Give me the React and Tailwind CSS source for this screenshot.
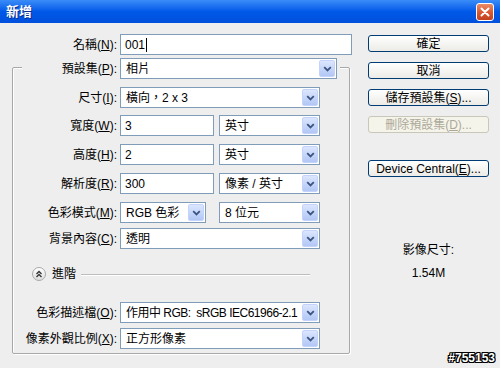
import React from "react";

const Chevron = () => (
  <svg width="9" height="6" viewBox="0 0 9 6">
    <path d="M1.2 1.2 L4.5 4.5 L7.8 1.2" fill="none" stroke="#3B5482" strokeWidth="1.8" />
  </svg>
);

const Select = ({ w, children }) => (
  <div className={`${w} h-[21px] border border-[#7F9DB9] bg-white flex items-center pl-[5px] pr-[1px]`}>
    <span className="whitespace-nowrap overflow-hidden flex-1">{children}</span>
    <div className="w-[16px] h-[17px] shrink-0 rounded-[2px] border border-[#C3D3FD] bg-linear-to-b from-[#DCE6FD] to-[#B2C7F5] flex items-center justify-center">
      <Chevron />
    </div>
  </div>
);

const Input = ({ w, children }) => (
  <div className={`${w} h-[21px] border border-[#7F9DB9] bg-white flex items-center pl-[4px] whitespace-nowrap`}>
    {children}
  </div>
);

const Label = ({ w, children }) => (
  <div className={`${w} shrink-0 text-right whitespace-nowrap pr-[3px]`}>{children}</div>
);

const Btn = ({ children, disabled }) => (
  <div
    className={`w-[121px] h-[17px] rounded-[3px] border flex items-center justify-center whitespace-nowrap ${
      disabled
        ? "border-[#C9C7BA] text-[#ACA899] bg-[#F5F4EA]"
        : "border-[#003C74] bg-linear-to-b from-[#FFFFFF] to-[#ECEBE6]"
    }`}
  >
    {children}
  </div>
);

export default function App() {
  return (
    <div className="w-[500px] h-[368px] relative overflow-hidden bg-[#EEEEEE] text-black text-[12px] leading-[16px] font-['Liberation_Sans','Noto_Sans_CJK_TC',sans-serif]">
      {/* Title bar */}
      <div className="h-[23px] bg-linear-to-b from-[#3A8CF8] via-[#0058E8] to-[#0050DC] flex items-center pl-[6px] pr-[6px]">
        <span className="text-white font-bold text-[13px] [text-shadow:1px_1px_0_#0A2E8C]">新增</span>
        <div className="ml-auto w-[18px] h-[18px] rounded-[3px] border border-white bg-linear-to-b from-[#E98C6A] via-[#DA5A33] to-[#C2401F] flex items-center justify-center">
          <svg width="10" height="10" viewBox="0 0 10 10">
            <path d="M1.5 1.5 L8.5 8.5 M8.5 1.5 L1.5 8.5" stroke="#fff" strokeWidth="2" strokeLinecap="round" />
          </svg>
        </div>
      </div>

      <div className="flex">
        {/* Left column */}
        <div className="w-[358px]">
          <div className="mt-[11px] flex items-center">
            <Label w="w-[120px]">名稱(<u>N</u>):</Label>
            <Input w="w-[232px]">
              001<span className="inline-block w-[1px] h-[14px] bg-black ml-[1px]" />
            </Input>
          </div>

          <div className="mt-[3px] ml-[22px] w-[318px] relative z-10 bg-[#EEEEEE] flex items-center">
            <Label w="w-[98px]">預設集(<u>P</u>):</Label>
            <Select w="w-[217px]">相片</Select>
          </div>

          <div className="ml-[12px] w-[338px] h-[287px] mt-[-12px] border border-[#A8A8A8] rounded-[2px] shadow-[inset_1px_1px_0_#fff,1px_1px_0_#fff]">
            <div className="mt-[19px] flex items-center">
              <Label w="w-[107px]">尺寸(<u>I</u>):</Label>
              <Select w="w-[200px]">橫向，2 x 3</Select>
            </div>
            <div className="mt-[7px] flex items-center">
              <Label w="w-[107px]">寬度(<u>W</u>):</Label>
              <Input w="w-[94px]">3</Input>
              <div className="ml-[5px]">
                <Select w="w-[101px]">英寸</Select>
              </div>
            </div>
            <div className="mt-[8px] flex items-center">
              <Label w="w-[107px]">高度(<u>H</u>):</Label>
              <Input w="w-[94px]">2</Input>
              <div className="ml-[5px]">
                <Select w="w-[101px]">英寸</Select>
              </div>
            </div>
            <div className="mt-[8px] flex items-center">
              <Label w="w-[107px]">解析度(<u>R</u>):</Label>
              <Input w="w-[94px]">300</Input>
              <div className="ml-[5px]">
                <Select w="w-[101px]">像素 / 英寸</Select>
              </div>
            </div>
            <div className="mt-[8px] flex items-center">
              <Label w="w-[107px]">色彩模式(<u>M</u>):</Label>
              <Select w="w-[86px]">RGB 色彩</Select>
              <div className="ml-[13px]">
                <Select w="w-[101px]">8 位元</Select>
              </div>
            </div>
            <div className="mt-[5px] flex items-center">
              <Label w="w-[107px]">背景內容(<u>C</u>):</Label>
              <Select w="w-[200px]">透明</Select>
            </div>

            <div className="mt-[18px] h-[14px] flex items-center">
              <div className="ml-[19px] w-[14px] h-[14px] rounded-full border border-[#A9A9A9] bg-linear-to-b from-white to-[#DEDEDE] flex items-center justify-center">
                <svg width="8" height="8" viewBox="0 0 8 8">
                  <path d="M1.5 4 L4 1.5 L6.5 4 M1.5 7 L4 4.5 L6.5 7" fill="none" stroke="#333" strokeWidth="1.3" />
                </svg>
              </div>
              <span className="ml-[6px]">進階</span>
              <div className="ml-[5px] mr-[39px] flex-1 h-[1px] bg-[#BDBDBD] shadow-[0_1px_0_#fff]" />
            </div>

            <div className="mt-[21px] flex items-center">
              <Label w="w-[107px]">色彩描述檔(<u>O</u>):</Label>
              <Select w="w-[200px]">
                <span className="tracking-[-0.5px]">作用中 RGB:&nbsp; sRGB IEC61966-2.1</span>
              </Select>
            </div>
            <div className="mt-[5px] flex items-center">
              <Label w="w-[107px]">像素外觀比例(<u>X</u>):</Label>
              <Select w="w-[200px]">正方形像素</Select>
            </div>
          </div>
        </div>

        {/* Right column */}
        <div className="flex-1 pl-[10px] pt-[12px] flex flex-col">
          <Btn>確定</Btn>
          <div className="mt-[10px]"><Btn>取消</Btn></div>
          <div className="mt-[10px]"><Btn>儲存預設集(<u>S</u>)...</Btn></div>
          <div className="mt-[10px]"><Btn disabled>刪除預設集(<u>D</u>)...</Btn></div>
          <div className="mt-[27px]"><Btn>Device Central(<u>E</u>)...</Btn></div>
          <div className="mt-[65px] w-[121px] text-center">影像尺寸:</div>
          <div className="mt-[7px] w-[121px] text-center">1.54M</div>
        </div>
      </div>

      <div className="absolute right-[5px] bottom-[2px] text-white font-bold text-[12px] font-['Liberation_Sans',sans-serif] [text-shadow:1px_0_0_#000,-1px_0_0_#000,0_1px_0_#000,0_-1px_0_#000,1px_1px_0_#000,-1px_-1px_0_#000,1px_-1px_0_#000,-1px_1px_0_#000]">
        #755153
      </div>
    </div>
  );
}
